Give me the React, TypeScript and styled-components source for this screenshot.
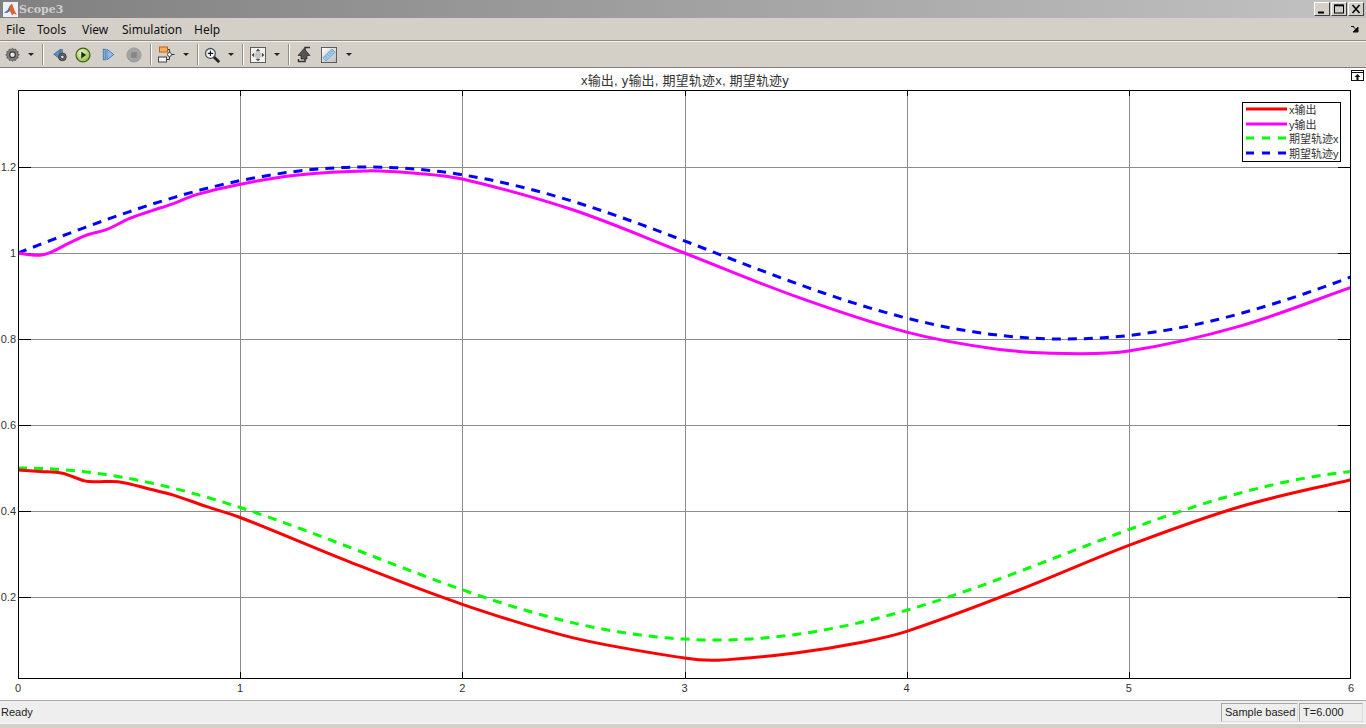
import React from "react";
import styled, { createGlobalStyle } from "styled-components";

const Global = createGlobalStyle`
  html, body { margin: 0; padding: 0; height: 100%; overflow: hidden; background: #d4d0c8; }
  #root { height: 100%; }
`;

const Win = styled.div`
  display: flex; flex-direction: column; height: 728px; width: 1366px; overflow: hidden;
  font-family: "Liberation Sans", Arial, sans-serif;
`;
const TitleBar = styled.div`
  height: 18px; flex: none; display: flex; align-items: center; padding: 0 2px 0 3px;
  background: linear-gradient(to right, #808080, #c2c2c2);
`;
const TitleText = styled.span`
  margin-left: 1px; flex: 1; font: bold 11px "DejaVu Serif", "Liberation Serif", serif;
  letter-spacing: 0; color: #cfcfcf;
`;
const WinButtons = styled.div`display: flex; gap: 1px;`;
const WinButton = styled.div`
  width: 16px; height: 14px; box-sizing: border-box; background: #d4d0c8;
  border: 1px solid; border-color: #fff #404040 #404040 #fff;
  display: flex; align-items: center; justify-content: center;
`;
const MenuBar = styled.div`
  height: 23px; flex: none; box-sizing: border-box; display: flex; align-items: center;
  padding: 0 7px 0 6px; background: #d4d0c8; border-bottom: 1px solid #8a8a86;
  font: 12px "Noto Sans", "DejaVu Sans", sans-serif; color: #111;
`;
const MenuItem = styled.span<{ $w: number }>`width: ${p => p.$w}px; flex: none;`;
const MenuSpacer = styled.div`flex: 1;`;
const Toolbar = styled.div`
  height: 27px; flex: none; box-sizing: border-box; display: flex; align-items: center;
  padding-left: 3px; background: #d4d0c8; border-top: 1px solid #f4f2ee; border-bottom: 1px solid #7d7d7a;
`;
const ToolIcon = styled.div<{ $w: number }>`
  width: ${p => p.$w}px; height: 20px; flex: none; display: flex; align-items: center; justify-content: center;
`;
const Sep = styled.div`
  width: 1px; height: 21px; flex: none; margin: 0 5px; background: #8e8e8a; box-shadow: 1px 0 0 #fbfbf8;
`;
const Caret = styled.div<{ $ml?: number }>`
  width: 0; height: 0; flex: none; margin: 0 3px 0 ${p => p.$ml ?? 7}px;
  border-left: 3px solid transparent; border-right: 3px solid transparent; border-top: 3px solid #222;
`;
const PlotArea = styled.div`
  position: relative; height: 632px; flex: none; background: #fff;
`;
const PlotSvg = styled.svg`display: block;`;
const Undock = styled.div`position: absolute; top: 2px; right: 1px; line-height: 0;`;
const Legend = styled.div`
  position: absolute; left: 1242px; top: 34px; width: 99px; height: 60px; box-sizing: border-box;
  border: 1px solid #000; background: #fff; padding: 0 0 0 3px;
  display: flex; flex-direction: column;
`;
const LegendRow = styled.div`
  height: 14.6px; box-sizing: border-box; padding-bottom: 2px; display: flex; align-items: center; gap: 2px; color: #333;
  font: 11px "Liberation Sans", "Noto Sans CJK SC", sans-serif; white-space: nowrap;
`;
const StatusBar = styled.div`
  height: 24px; flex: none; box-sizing: border-box; display: flex; align-items: center;
  background: #eeeeee; border-top: 1px solid #a8a8a8; border-bottom: 1px solid #fbfbfb;
  padding: 0 3px 0 1px; gap: 1px; font: 11px "Liberation Sans", Arial, sans-serif; color: #222;
`;
const StatusText = styled.span`flex: 1;`;
const StatusCell = styled.div<{ $w: number }>`
  width: ${p => p.$w}px; height: 19px; box-sizing: border-box; display: flex; align-items: center; padding-left: 3px;
  border: 1px solid #a8a8a8; border-right-color: #dcdcdc; border-bottom-color: #dcdcdc;
`;
const BottomEdge = styled.div`flex: 1; background: #d4d0c8;`;

const X = (t: number) => 18 + t * (1333 / 6);
const Y = (v: number) => 253 + (1 - v) * 430;

function smooth(pts: number[][]) {
  const n = pts.length;
  const slope = (i: number) => {
    const a = pts[Math.max(i - 1, 0)], b = pts[Math.min(i + 1, n - 1)];
    return (b[1] - a[1]) / (b[0] - a[0]);
  };
  let d = `M${X(pts[0][0]).toFixed(1)} ${Y(pts[0][1]).toFixed(1)}`;
  for (let i = 0; i < n - 1; i++) {
    const [t0, v0] = pts[i], [t1, v1] = pts[i + 1];
    const h = t1 - t0;
    const c1t = t0 + h / 3, c1v = v0 + (slope(i) * h) / 3;
    const c2t = t1 - h / 3, c2v = v1 - (slope(i + 1) * h) / 3;
    d += `C${X(c1t).toFixed(1)} ${Y(c1v).toFixed(1)} ${X(c2t).toFixed(1)} ${Y(c2v).toFixed(1)} ${X(t1).toFixed(1)} ${Y(v1).toFixed(1)}`;
  }
  return d;
}
const sample = (f: (t: number) => number) => {
  const out: number[][] = [];
  for (let i = 0; i <= 60; i++) out.push([i / 10, f(i / 10)]);
  return out;
};

const yOut = [[0,1],[0.05,0.996],[0.1,0.995],[0.15,1.002],[0.2,1.015],[0.3,1.04],[0.4,1.055],[0.5,1.08],[0.6,1.098],[0.7,1.115],[0.8,1.135],[1,1.16],[1.25,1.181],[1.57,1.191],[1.8,1.185],[2,1.172],[2.5,1.1],[3,1.0],[3.5,0.899],[4,0.816],[4.4,0.777],[4.71,0.766],[5,0.772],[5.5,0.83],[6,0.92]];
const xOut = [[0,0.495],[0.1,0.492],[0.2,0.488],[0.3,0.47],[0.35,0.468],[0.45,0.468],[0.6,0.45],[0.7,0.437],[0.85,0.41],[1,0.385],[1.5,0.28],[2,0.183],[2.5,0.105],[3,0.058],[3.15,0.053],[3.5,0.07],[3.8,0.095],[4,0.12],[4.5,0.215],[5,0.32],[5.5,0.41],[6,0.473]];

const Gear = () => (
  <svg width="15" height="15" viewBox="0 0 17 17">
    <path d="M8.5 1l1.3 2 2.3-.7.6 2.3 2.3.6-.7 2.3 2 1.3-2 1.3.7 2.3-2.3.6-.6 2.3-2.3-.7-1.3 1.7-1.3-1.7-2.3.7-.6-2.3-2.3-.6.7-2.3-2-1.3 2-1.3-.7-2.3 2.3-.6.6-2.3 2.3.7z" fill="#808080" stroke="#4a4a4a" strokeWidth=".8"/>
    <circle cx="8.5" cy="8.7" r="3.2" fill="#e8e8e8" stroke="#333" strokeWidth="1.3"/>
  </svg>
);
const Back = () => (
  <svg width="15" height="14" viewBox="0 0 20 18">
    <path d="M1 8L9 2v12z" fill="#5f8fc4" stroke="#2f5f98"/>
    <rect x="10" y="1.5" width="2.4" height="7" fill="#5f8fc4" stroke="#2f5f98" strokeWidth=".8"/>
    <circle cx="12.5" cy="11.5" r="5.2" fill="#666" stroke="#333"/>
    <circle cx="12.5" cy="11.5" r="2.3" fill="#eee" stroke="#222"/>
  </svg>
);
const Play = () => (
  <svg width="16" height="16" viewBox="0 0 18 18">
    <defs><radialGradient id="pg" cx=".4" cy=".35" r=".8"><stop offset="0" stopColor="#f1f7c8"/><stop offset="1" stopColor="#7db32a"/></radialGradient></defs>
    <circle cx="9" cy="9" r="7.8" fill="url(#pg)" stroke="#39621a" strokeWidth="1.4"/>
    <path d="M7 5.2L12.6 9 7 12.8z" fill="#1d2d12"/>
  </svg>
);
const Step = () => (
  <svg width="13" height="13" viewBox="0 0 16 16">
    <rect x="1.5" y="1.5" width="2.5" height="13" fill="#8fbbe6" stroke="#2f6fae"/>
    <path d="M6 1.5L14.5 8 6 14.5z" fill="#8fbbe6" stroke="#2f6fae"/>
  </svg>
);
const Stop = () => (
  <svg width="16" height="16" viewBox="0 0 18 18">
    <circle cx="9" cy="9" r="8" fill="#a3a3a1" stroke="#9a9a98"/>
    <rect x="5.8" y="5.8" width="6.4" height="6.4" fill="#868684"/>
  </svg>
);
const Blocks = () => (
  <svg width="17" height="17" viewBox="0 0 17 17">
    <path d="M9 3.5h2.5v3M8 13.5h3.5v-3M13 8.5h3.5" fill="none" stroke="#333"/>
    <rect x="1.5" y="1" width="8" height="5" fill="#f5b25b" stroke="#c85a10"/>
    <rect x=".5" y="11" width="8" height="5" fill="#f2f2f2" stroke="#444"/>
    <circle cx="11.5" cy="8.5" r="2" fill="#fafafa" stroke="#444"/>
  </svg>
);
const Zoom = () => (
  <svg width="16" height="16" viewBox="0 0 17 17">
    <path d="M10 10l5.2 5.2" stroke="#222" strokeWidth="3" strokeLinecap="round"/>
    <circle cx="6.8" cy="6.8" r="5.2" fill="#f4f7fa" stroke="#4a535c" strokeWidth="1.4"/>
    <path d="M4 6.8h5.6M6.8 4v5.6" stroke="#111" strokeWidth="1.2"/>
  </svg>
);
const Autoscale = () => (
  <svg width="16" height="16" viewBox="0 0 17 17">
    <rect x=".5" y=".5" width="16" height="16" fill="#f1f1ef" stroke="#555"/>
    <circle cx="8.5" cy="8.5" r="3.4" fill="#c5c5c5"/>
    <path d="M8.5 1.8l2.5 2.6H6zM8.5 15.2L6 12.6h5zM1.8 8.5l2.6-2.5v5zM15.2 8.5l-2.6 2.5V6z" fill="#444"/>
  </svg>
);
const Param = () => (
  <svg width="14" height="17" viewBox="0 0 14 17">
    <path d="M13 1.5H8V15.5H1.5V13" fill="none" stroke="#333" strokeWidth="1.5"/>
    <path d="M7 2.5L13 9.5H10V13H4V9.5H1z" fill="#555" stroke="#222" strokeWidth=".7"/>
  </svg>
);
const Ruler = () => (
  <svg width="16" height="16" viewBox="0 0 17 17">
    <defs><linearGradient id="rg" x1="0" y1="0" x2="1" y2="1"><stop offset="0" stopColor="#fff"/><stop offset="1" stopColor="#bbb"/></linearGradient></defs>
    <rect x=".5" y=".5" width="16" height="16" fill="url(#rg)" stroke="#555"/>
    <path d="M2 11.5L11.5 2 15 5.5 5.5 15z" fill="#9dcbe8" stroke="#4d8fbd" strokeWidth=".7"/>
    <path d="M5 10l1.2 1.2M7 8l1.2 1.2M9 6l1.2 1.2M11 4l1.2 1.2" stroke="#3b7dab" strokeWidth=".8"/>
  </svg>
);
const Logo = () => (
  <svg width="15" height="15" viewBox="0 0 15 15">
    <rect width="15" height="15" fill="#eef2f8"/>
    <path d="M1 10.5l3.5-2L7 3.5 9 1.5l2.5 7 2.5 4.5-3-1.5-2 2-2-4.5-2.5.5z" fill="#e2622a"/>
    <path d="M1 10.5l3.5-2 2 1-2.5 1.5z M4.5 8.5L7 3.5l-.5 6z" fill="#3d7cc4"/>
  </svg>
);

const YTICKS = ["1.2", "1", "0.8", "0.6", "0.4", "0.2"];
const YV = [1.2, 1, 0.8, 0.6, 0.4, 0.2];
const XT = [0, 1, 2, 3, 4, 5, 6];

export default function App() {
  const L = 18, R = 1351, T = 90, B = 678;
  const labelStyle = { font: '11px "Liberation Sans", Arial, sans-serif', fill: "#333" } as const;
  return (
    <Win>
      <Global />
      <TitleBar>
        <Logo />
        <TitleText>Scope3</TitleText>
        <WinButtons>
          <WinButton><svg width="10" height="10" viewBox="0 0 10 10"><path d="M1 8.5h6" stroke="#000" strokeWidth="2"/></svg></WinButton>
          <WinButton><svg width="10" height="10" viewBox="0 0 10 10"><rect x=".5" y="1" width="9" height="8" fill="none" stroke="#000"/><path d="M.5 1.5h9" stroke="#000" strokeWidth="1.6"/></svg></WinButton>
          <WinButton><svg width="10" height="10" viewBox="0 0 10 10"><path d="M1.5 1l7 8M8.5 1l-7 8" stroke="#000" strokeWidth="1.5"/></svg></WinButton>
        </WinButtons>
      </TitleBar>
      <MenuBar>
        <MenuItem $w={31}>File</MenuItem>
        <MenuItem $w={45}>Tools</MenuItem>
        <MenuItem $w={40}>View</MenuItem>
        <MenuItem $w={72}>Simulation</MenuItem>
        <MenuItem $w={30}>Help</MenuItem>
        <MenuSpacer />
        <svg width="8" height="7" viewBox="0 0 8 7"><path d="M0 .5h3M2 .5l4 4M7 1v5H2z" fill="#111" stroke="#111"/></svg>
      </MenuBar>
      <Toolbar>
        <ToolIcon $w={18}><Gear /></ToolIcon><Caret />
        <Sep />
        <ToolIcon $w={24}><Back /></ToolIcon>
        <ToolIcon $w={22}><Play /></ToolIcon>
        <ToolIcon $w={28}><Step /></ToolIcon>
        <ToolIcon $w={23}><Stop /></ToolIcon>
        <Sep />
        <ToolIcon $w={20}><Blocks /></ToolIcon><Caret />
        <Sep />
        <ToolIcon $w={18}><Zoom /></ToolIcon><Caret />
        <Sep />
        <ToolIcon $w={19}><Autoscale /></ToolIcon><Caret />
        <Sep />
        <ToolIcon $w={20}><Param /></ToolIcon>
        <ToolIcon $w={29}><Ruler /></ToolIcon><Caret $ml={3} />
      </Toolbar>
      <PlotArea>
        <PlotSvg width="1366" height="632" viewBox="0 68 1366 632">
          <defs><clipPath id="ax"><rect x={L} y={T} width={R - L} height={B - T} /></clipPath></defs>
          <text x="685" y="85" textAnchor="middle" letterSpacing="0.2" style={{ font: '13px "Liberation Sans", "Noto Sans CJK SC", sans-serif', fill: "#333" }}>x输出, y输出, 期望轨迹x, 期望轨迹y</text>
          {YV.map(v => <path key={v} d={`M${L} ${Y(v) + 0.5}H${R}`} stroke="#8c8c8c" />)}
          {XT.slice(1, 6).map(t => <path key={t} d={`M${Math.round(X(t)) + 0.5} ${T}V${B}`} stroke="#8c8c8c" />)}
          {YV.map(v => <path key={v} d={`M${L} ${Y(v) + 0.5}h13M${R} ${Y(v) + 0.5}h-13`} stroke="#000" />)}
          {XT.slice(1, 6).map(t => <path key={t} d={`M${Math.round(X(t)) + 0.5} ${T}v6M${Math.round(X(t)) + 0.5} ${B}v-6`} stroke="#000" />)}
          <g clipPath="url(#ax)" fill="none" strokeWidth="3">
            <path d={smooth(sample(t => 0.3 + 0.2 * Math.cos(t)))} stroke="#00ff00" strokeDasharray="9 7" />
            <path d={smooth(sample(t => 1 + 0.2 * Math.sin(t)))} stroke="#0000ff" strokeDasharray="9 7" />
            <path d={smooth(xOut)} stroke="#ff0000" />
            <path d={smooth(yOut)} stroke="#ff00ff" />
          </g>
          <rect x={L + 0.5} y={T + 0.5} width={R - L - 1} height={B - T} fill="none" stroke="#000" />
          {YTICKS.map((s, i) => <text key={s} x="16" y={Y(YV[i]) + 4} textAnchor="end" style={labelStyle}>{s}</text>)}
          {XT.map(t => <text key={t} x={X(t)} y="692" textAnchor="middle" style={labelStyle}>{t}</text>)}
        </PlotSvg>
        <Undock>
          <svg width="14" height="11" viewBox="0 0 14 11"><rect x=".5" y=".5" width="12" height="10" fill="#fff" stroke="#111"/><path d="M.5 2.5h12" stroke="#111"/><path d="M6.5 4l3 3h-2v3h-2V7h-2z" fill="#111"/></svg>
        </Undock>
        <Legend>
          {[
            ["x输出", "#ff0000", ""],
            ["y输出", "#ff00ff", ""],
            ["期望轨迹x", "#00ff00", "8 8"],
            ["期望轨迹y", "#0000ff", "8 8"],
          ].map(([label, c, dash]) => (
            <LegendRow key={label}>
              <svg width="41" height="4" viewBox="0 0 41 4"><path d="M0 2H41" stroke={c} strokeWidth="3" strokeDasharray={dash || undefined} /></svg>
              <span>{label}</span>
            </LegendRow>
          ))}
        </Legend>
      </PlotArea>
      <StatusBar>
        <StatusText>Ready</StatusText>
        <StatusCell $w={77}>Sample based</StatusCell>
        <StatusCell $w={64}>T=6.000</StatusCell>
      </StatusBar>
      <BottomEdge />
    </Win>
  );
}
